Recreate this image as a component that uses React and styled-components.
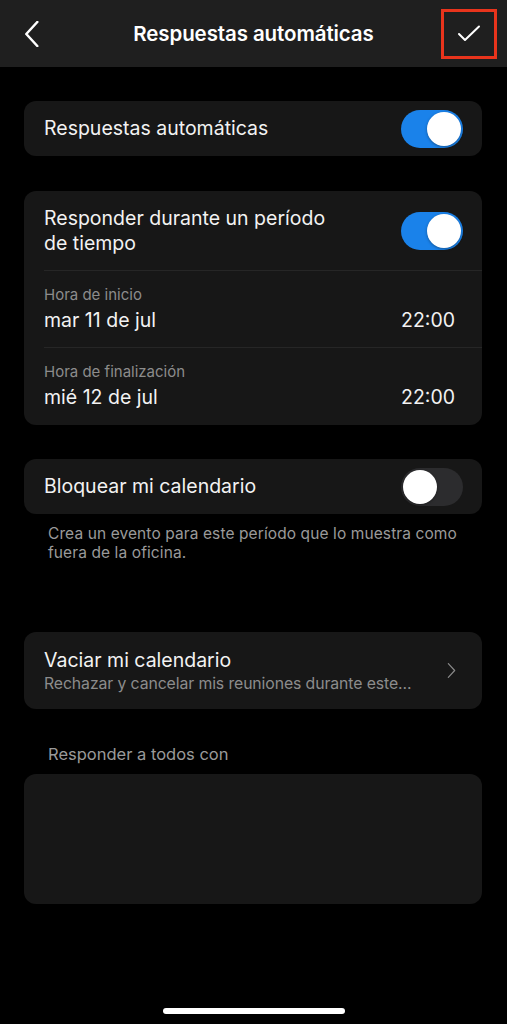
import React from 'react'
import styled, {createGlobalStyle} from 'styled-components'

const GlobalStyle = createGlobalStyle`
  html, body {
    margin: 0;
    padding: 0;
    background: #000;
  }
  body {
    font-family: Inter, "Noto Sans", "Liberation Sans", sans-serif;
    color: #f2f2f2;
    -webkit-font-smoothing: antialiased;
  }
`

const Page = styled.div`
  display: flex;
  flex-direction: column;
  width: 507px;
  min-height: 1024px;
  background: #000;
`

const Header = styled.header`
  display: grid;
  grid-template-columns: 1fr auto 1fr;
  align-items: center;
  height: 67px;
  background: #1f1f1f;
`

const BackButton = styled.button`
  justify-self: start;
  display: flex;
  align-items: center;
  margin-left: 24px;
  padding: 0;
  border: none;
  background: none;
  cursor: pointer;
`

const Title = styled.h1`
  margin: 0;
  font-size: 20.5px;
  font-weight: 600;
  color: #fff;
  letter-spacing: -0.1px;
`

const ConfirmButton = styled.button`
  justify-self: end;
  display: flex;
  align-items: center;
  justify-content: center;
  box-sizing: border-box;
  width: 56px;
  height: 50px;
  margin-right: 10px;
  padding: 0;
  border: 3px solid #e8341c;
  background: none;
  cursor: pointer;
`

const Content = styled.main`
  display: flex;
  flex-direction: column;
  padding: 34px 25px 0 24px;
`

const Card = styled.section`
  display: flex;
  flex-direction: column;
  background: #171717;
  border-radius: 12px;
  margin-top: ${p => p.$gap || 0}px;
  min-height: ${p => p.$height || 0}px;
`

const Row = styled.div`
  display: flex;
  align-items: center;
  justify-content: space-between;
  box-sizing: border-box;
  min-height: ${p => p.$height || 55}px;
  padding: ${p => p.$pad || '0 19px 0 20px'};
  & + & {
    border-top: 1px solid #262626;
    margin-left: 20px;
    padding-left: 0;
  }
`

const RowText = styled.div`
  font-size: 19.5px;
  line-height: 25px;
  color: #f2f2f2;
  max-width: 300px;
`

const TimeBlock = styled.div`
  display: flex;
  flex-direction: column;
`

const SmallLabel = styled.div`
  font-size: 15px;
  line-height: 20px;
  color: #8c8c8c;
  margin-bottom: 2px;
`

const Value = styled.div`
  font-size: 19.5px;
  line-height: 26px;
  color: #f2f2f2;
`

const TimeValue = styled(Value)`
  align-self: flex-end;
  margin-right: 8px;
`

const Track = styled.div`
  position: relative;
  flex: none;
  width: 62px;
  height: 38px;
  border-radius: 19px;
  background: ${p => (p.$on ? '#1a82ea' : '#2c2c2e')};
`

const Knob = styled.div`
  position: absolute;
  top: 2px;
  left: ${p => (p.$on ? '26px' : '2px')};
  width: 34px;
  height: 34px;
  border-radius: 50%;
  background: #fff;
  box-shadow: 0 1px 3px rgba(0, 0, 0, 0.35);
`

const Toggle = ({on}) => (
  <Track $on={on}>
    <Knob $on={on} />
  </Track>
)

const Footnote = styled.p`
  margin: 10px 8px 0 24px;
  font-size: 15.5px;
  line-height: 19px;
  color: #9a9a9a;
  letter-spacing: 0.1px;
`

const LinkTitle = styled.div`
  font-size: 19.5px;
  line-height: 26px;
  color: #f2f2f2;
`

const LinkSub = styled.div`
  font-size: 15.8px;
  line-height: 22px;
  color: #8c8c8c;
  letter-spacing: -0.1px;
  white-space: nowrap;
`

const SectionLabel = styled.div`
  margin: 34px 0 9px 24px;
  font-size: 16.5px;
  line-height: 22px;
  color: #9a9a9a;
`

const HomeIndicator = styled.div`
  align-self: center;
  width: 182px;
  height: 6px;
  margin: auto 0 10px;
  border-radius: 3px;
  background: #fff;
`

const Chevron = ({dir = 'left', color = '#fff', w = 2.5, size = 26}) => (
  <svg width={size * 0.6} height={size} viewBox="0 0 15 26" fill="none">
    <polyline
      points={dir === 'left' ? '13,1 2,13 13,25' : '2,1 13,13 2,25'}
      stroke={color}
      strokeWidth={w}
      strokeLinecap="round"
      strokeLinejoin="round"
    />
  </svg>
)

const Check = () => (
  <svg width="24" height="18" viewBox="0 0 24 18" fill="none">
    <polyline points="2,9 8,15 22,1.5" stroke="#fff" strokeWidth="2" strokeLinecap="round" strokeLinejoin="round" />
  </svg>
)

export default function App () {
  return (
    <Page>
      <GlobalStyle />
      <Header>
        <BackButton aria-label="Atrás">
          <Chevron dir="left" />
        </BackButton>
        <Title>Respuestas automáticas</Title>
        <ConfirmButton aria-label="Guardar">
          <Check />
        </ConfirmButton>
      </Header>

      <Content>
        <Card>
          <Row $height={55}>
            <RowText>Respuestas automáticas</RowText>
            <Toggle on />
          </Row>
        </Card>

        <Card $gap={35}>
          <Row $height={79}>
            <RowText>Responder durante un período de tiempo</RowText>
            <Toggle on />
          </Row>
          <Row $height={76} $pad="14px 19px 14px 20px">
            <TimeBlock>
              <SmallLabel>Hora de inicio</SmallLabel>
              <Value>mar 11 de jul</Value>
            </TimeBlock>
            <TimeValue>22:00</TimeValue>
          </Row>
          <Row $height={77} $pad="14px 19px 15px 20px">
            <TimeBlock>
              <SmallLabel>Hora de finalización</SmallLabel>
              <Value>mié 12 de jul</Value>
            </TimeBlock>
            <TimeValue>22:00</TimeValue>
          </Row>
        </Card>

        <Card $gap={34}>
          <Row $height={55}>
            <RowText>Bloquear mi calendario</RowText>
            <Toggle />
          </Row>
        </Card>
        <Footnote>
          Crea un evento para este período que lo muestra como fuera de la oficina.
        </Footnote>

        <Card $gap={70}>
          <Row $height={77} $pad="0 26px 0 20px">
            <TimeBlock>
              <LinkTitle>Vaciar mi calendario</LinkTitle>
              <LinkSub>Rechazar y cancelar mis reuniones durante este...</LinkSub>
            </TimeBlock>
            <Chevron dir="right" color="#8a8a8a" w={2} size={15} />
          </Row>
        </Card>

        <SectionLabel>Responder a todos con</SectionLabel>
        <Card $height={130} />
      </Content>

      <HomeIndicator />
    </Page>
  )
}
